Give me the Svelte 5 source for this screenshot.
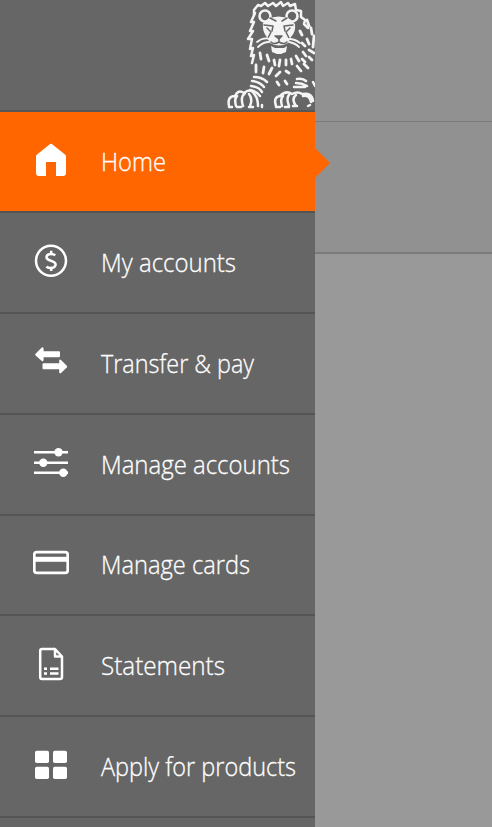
<script>
  const items = [
    { label: 'Home', icon: 'home', w: 65 },
    { label: 'My accounts', icon: 'dollar', w: 135 },
    { label: 'Transfer & pay', icon: 'transfer', w: 153 },
    { label: 'Manage accounts', icon: 'sliders', w: 189 },
    { label: 'Manage cards', icon: 'card', w: 149 },
    { label: 'Statements', icon: 'document', w: 124 },
    { label: 'Apply for products', icon: 'grid', w: 195 }
  ];
  let active = $state('Home');
</script>

<div class="screen">
  <nav>
    <header>
      <svg class="lion" viewBox="226 0 89 110" width="89" height="110" fill="none" stroke="#f4f4f4" stroke-linecap="round" stroke-linejoin="round">
        <g stroke-width="2.5">
          <path d="M254 15 L254 10 L258 5 L261 6 L265 3 L268 6 L273 3 L276 6 L281 2 L283 6 L288 3 L290 6 L295 4 L296 10 L301 11 L301 17 L305 20 L304 24 L308 28"/>
          <path d="M255 13 L251 22 L254 22 L250 31 L253 31 L248 39 L252 39 L250 49 L253 48 L251 56 L254 55 L252 63"/>
        </g>
        <g stroke-width="2.8">
          <path d="M307 20 L309 26 M311 28 L312 34 M314 36 L313 47 M300 31 L302 35 M307 39 L309 44 M302 43 L305 46 M309 50 L314 53"/>
          <path d="M256 65 L256 72 M264 67 L263 73 M272 68 L269 74 M280 72 L276 76 M286 71 L289 73 M297 66 L301 71 M304 64 L308 68"/>
          <path d="M260 53 L261 59 M267 55 L269 61 M274 60 L275 65 M280 60 L279 66 M286 60 L286 65 M291 59 L292 64 M296 56 L299 61 M302 59 L305 62 M303 52 L306 56 M309 57 L312 60 M277 82 L279 85 M285 81 L287 84"/>
        </g>
        <circle cx="265" cy="16" r="5.500" stroke-width="2.600"/>
        <circle cx="292" cy="16" r="5.500" stroke-width="2.600"/>
        <path d="M268 19 Q278 14 290 19 L295 24 Q296 32 291 37 L288 43 Q279 48 270 43 L266 36 Q262 30 263 23Z" fill="#f4f4f4" stroke="none"/>
        <g stroke="#666" stroke-width="1.500">
          <path d="M270 18 L276 21 M287 18 L282 21 M264 25 L273 26 L272 31 M293 25 L284 26 L285 31"/>
          <path d="M267 28 L271 32 L268 38 M290 28 L286 32 L289 38"/>
          <path d="M275 36 H282 L279 39Z" fill="#666"/>
          <path d="M279 39 V42 M279 42 Q274 45 271 42 M279 42 Q284 45 287 42"/>
        </g>
        <g stroke-width="1.800">
          <path d="M270 39 Q263 37 257 42 M269 42 Q263 42 258 47 M289 39 Q295 39 300 43 M289 42 Q295 43 299 47"/>
        </g>
        <path d="M271 46 L275 48 H284 L287 46 L286 52 L281 54 H277 L272 52Z" fill="#f4f4f4" stroke="none"/>
        <g stroke-width="2.500">
          <path d="M254 77 Q262 77 267 82 M252 81 Q260 82 264 87 M251 86 Q259 87 262 92 M250 90 Q256 91 260 96 M297 79 Q303 78 306 81 M296 83 Q302 83 307 86 M294 87 H305 M313 82 L315 86"/>
          <path d="M229 106 Q227 96 235 96 Q238 89 244 93 Q251 87 255 95 Q258 99 258 106 M236 106 Q234 99 237 96 M243 106 Q240 97 245 93 M250 106 Q253 99 249 94 M229 107 H232 M237 107 H241 M249 107 H253 M262 105 V107"/>
          <path d="M276 106 Q273 97 280 96 Q286 90 292 94 Q298 91 302 94 Q312 92 313 101 M282 106 Q280 99 283 96 M289 106 Q286 98 289 95 M296 106 Q291 99 296 95 M303 96 Q310 95 311 102 M276 107 H280 M285 107 H289 M293 106 H297 M308 106 L310 105"/>
        </g>
      </svg>
    </header>
    {#each items as item}
      <button class:active={active === item.label} onclick={() => (active = item.label)}>
        <svg class="icon" viewBox="0 0 36 36" width="36" height="36" fill="none" stroke="#fff">
          {#if item.icon === 'home'}
            <path d="M16.500 2.500Q18 1 19.500 2.500L32 12.500Q33 13.300 33 14.500V31Q33 34 30 34H23V20H13V34H6Q3 34 3 31V14.500Q3 13.300 4 12.500Z" fill="#fff" stroke="none"/>
          {:else if item.icon === 'dollar'}
            <circle cx="18" cy="17.700" r="15" stroke-width="2.500"/>
            <path d="M22.300 12.300Q20.500 11 18 11C12.500 11 12.500 15.800 16 17L20 18.600C24.300 20.400 22.800 25 18 25Q15.200 25 13.300 23.700" stroke-width="2.500"/>
            <path d="M18.200 7.800V12M18.200 24V28" stroke-width="2.500"/>
          {:else if item.icon === 'transfer'}
            <path d="M2.600 9.700 8.500 3.800Q10.600 2.500 10.600 5V7.300H26Q27 7.300 27 8.500V12Q27 13.200 26 13.200H10.600V15.500Q10.600 18.300 8.500 16.800L2.600 11.500Q1.600 10.600 2.600 9.700ZM33.800 21.800 28 16Q26.200 14.700 26.200 17V19.300H10.500Q9.500 19.300 9.500 20.400V24Q9.500 25.200 10.500 25.200H26.200V27.500Q26.200 30.300 28 29L33.800 23.500Q34.700 22.600 33.800 21.800Z" fill="#fff" stroke="none"/>
          {:else if item.icon === 'sliders'}
            <path d="M1 7.300H35M1 17.700H35M1 27.700H35" stroke-width="2.500"/>
            <g fill="#fff" stroke="none"><circle cx="25.500" cy="7.300" r="4.200"/><circle cx="10.300" cy="17.700" r="4.200"/><circle cx="30.300" cy="27.700" r="4.200"/></g>
          {:else if item.icon === 'card'}
            <rect x="1.300" y="7.100" width="33.400" height="20.800" rx="2.500" stroke-width="2.700"/>
            <path d="M2 14.300H34" stroke-width="5"/>
          {:else if item.icon === 'document'}
            <path d="M22 3H9Q7.200 3 7.200 5V31Q7.200 33 9 33H27Q29 33 29 31V10.500L22 3V10.500H29" stroke-width="2.500" stroke-linejoin="round"/>
            <path d="M11 22.700H14M17 22.700H25.500M11 27.500H14M17 27.500H25.500" stroke-width="2.600"/>
          {:else}
            <g fill="#fff" stroke="none"><rect x="2" y="3.700" width="14" height="12.300" rx="1.800"/><rect x="20" y="3.700" width="14" height="12.300" rx="1.800"/><rect x="2" y="19.800" width="14" height="12.300" rx="1.800"/><rect x="20" y="19.800" width="14" height="12.300" rx="1.800"/></g>
          {/if}
        </svg>
        <svg class="label" width="204" height="40">
          <text x="0" y="30.500" textLength={item.w} lengthAdjust="spacingAndGlyphs">{item.label}</text>
        </svg>
      </button>
    {/each}
  </nav>
  <main>
    <div class="top"></div>
    <div class="band"></div>
  </main>
</div>

<style>
  .screen {
    display: flex;
    width: 492px;
    height: 827px;
    overflow: hidden;
    background: #999;
  }
  nav {
    width: 315px;
    flex: none;
    background: #666;
  }
  header {
    box-sizing: border-box;
    height: 112px;
    display: flex;
    justify-content: flex-end;
    border-bottom: 2px solid #575757;
  }
  .lion { display: block; }
  button {
    position: relative;
    box-sizing: border-box;
    display: flex;
    align-items: center;
    width: 100%;
    height: 100.880px;
    padding: 0 0 3px 33px;
    border: 0;
    border-bottom: 2px solid #555;
    background: #666;
  }
  button.active { background: #f60; }
  button.active::after {
    content: '';
    position: absolute;
    left: 315px;
    top: 36px;
    border: solid transparent;
    border-width: 15px 0 15px 15px;
    border-left-color: #f60;
  }
  .icon { flex: none; }
  .label {
    flex: none;
    margin-left: 32px;
    overflow: visible;
  }
  text {
    font: 300 25px "Open Sans", "Noto Sans", sans-serif;
    fill: #fff;
    stroke: #fff;
    stroke-width: 0.3px;
  }
  main { flex: 1; }
  .top {
    box-sizing: border-box;
    height: 122px;
    background: #919191;
    border-bottom: 1px solid #7a7a7a;
  }
  .band {
    box-sizing: border-box;
    height: 132px;
    background: #919191;
    border-bottom: 2px solid #7b7b7b;
  }
</style>
